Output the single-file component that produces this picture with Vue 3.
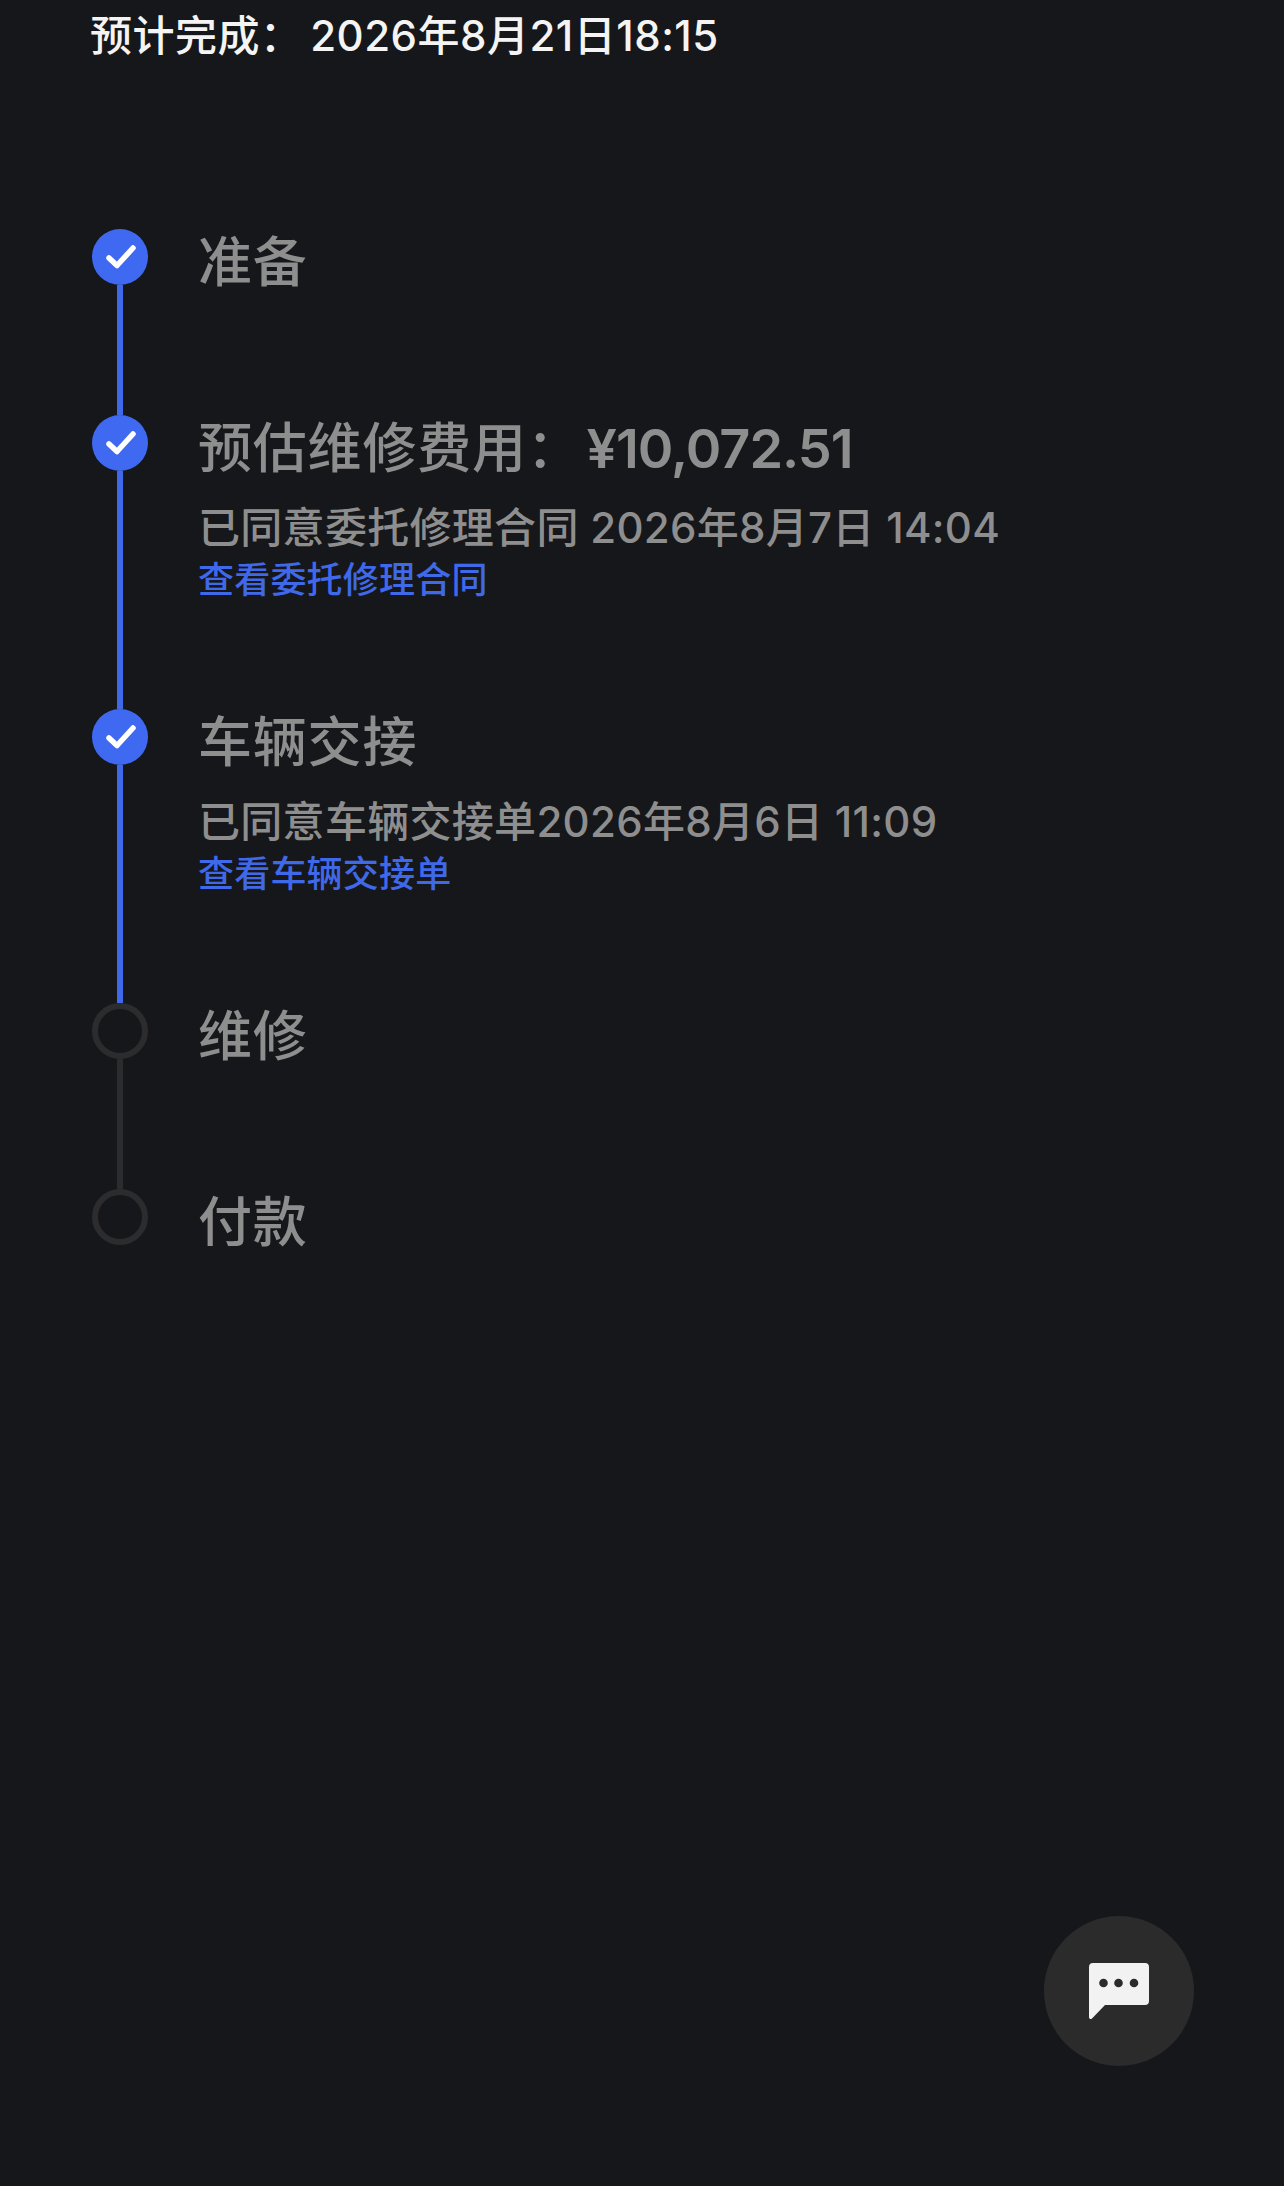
<template>
  <div class="page">
    <div class="eta">预计完成： 2026年8月21日18:15</div>

    <div class="timeline">
      <div v-for="(step, index) in steps" :key="index" class="step">
        <div class="rail">
          <div class="dot" :class="{ done: step.done }">
            <svg v-if="step.done" width="56" height="56" viewBox="0 0 56 56">
              <path d="M17 29L25 36.5L41 19" fill="none" stroke="#fff" stroke-width="5.5" stroke-linecap="round" stroke-linejoin="round" />
            </svg>
          </div>
          <div v-if="index < steps.length - 1" class="line" :class="{ done: step.done }"></div>
        </div>
        <div class="body">
          <div class="title">{{ step.title }}<span v-if="step.amount" class="amount">{{ step.amount }}</span></div>
          <div v-if="step.note" class="note">{{ step.note }}</div>
          <div v-if="step.link" class="link">{{ step.link }}</div>
        </div>
      </div>
    </div>

    <div class="chat">
      <svg width="60" height="57" viewBox="0 0 60 57">
        <path d="M4 0H56A4 4 0 0 1 60 4V38A4 4 0 0 1 56 42H16L3 55.5C1.8 56.7 0 56 0 54V4A4 4 0 0 1 4 0Z" fill="#f2f2f2" />
        <circle cx="14.5" cy="20" r="4.3" fill="#2b2b2c" />
        <circle cx="29.5" cy="20" r="4.3" fill="#2b2b2c" />
        <circle cx="45" cy="20" r="4.3" fill="#2b2b2c" />
      </svg>
    </div>
  </div>
</template>

<script setup>
const steps = [
  { title: '准备', done: true },
  {
    title: '预估维修费用：',
    amount: '¥10,072.51',
    note: '已同意委托修理合同 2026年8月7日 14:04',
    link: '查看委托修理合同',
    done: true,
  },
  {
    title: '车辆交接',
    note: '已同意车辆交接单2026年8月6日 11:09',
    link: '查看车辆交接单',
    done: true,
  },
  { title: '维修', done: false },
  { title: '付款', done: false },
]
</script>

<style>
html,
body {
  background: #16171a;
}
</style>

<style scoped>
.page {
  position: relative;
  height: 2186px;
  overflow: hidden;
  background: #16171a;
  font-family: Inter, "Noto Sans CJK SC", sans-serif;
  font-weight: 500;
  padding-left: 92px;
  box-sizing: border-box;
}
.eta {
  margin-left: -2px;
  padding-top: 8px;
  font-size: 42px;
  line-height: 56px;
  letter-spacing: 0.5px;
  word-spacing: -4px;
  color: #f4f4f4;
}
.timeline {
  margin-top: 165px;
}
.step {
  display: flex;
  gap: 50px;
  min-height: 186px;
}
.rail {
  display: flex;
  flex-direction: column;
  align-items: center;
  width: 56px;
}
.dot {
  width: 56px;
  height: 56px;
  box-sizing: border-box;
  border: 6px solid #2c2c2e;
  border-radius: 50%;
  flex: none;
}
.dot.done {
  border: none;
  background: #4069f2;
}
.dot svg {
  display: block;
}
.line {
  flex: 1;
  width: 6px;
  background: #2c2c2e;
}
.line.done {
  background: #3f69e8;
}
.body {
  padding-top: 2px;
  padding-bottom: 104px;
}
.title {
  font-size: 54px;
  line-height: 64px;
  letter-spacing: 0.8px;
  color: #8e8e8e;
}
.amount {
  margin-left: 5px;
  font-weight: 600;
  letter-spacing: -1px;
}
.note {
  margin-top: 21px;
  font-size: 42px;
  line-height: 52px;
  letter-spacing: 0.3px;
  color: #8e8e8e;
}
.link {
  margin-top: 1px;
  font-size: 36px;
  line-height: 50px;
  letter-spacing: 0.2px;
  color: #3f69e8;
}
.chat {
  position: absolute;
  left: 1044px;
  top: 1916px;
  width: 150px;
  height: 150px;
  border-radius: 50%;
  background: #2b2b2c;
  display: flex;
  align-items: center;
  justify-content: center;
}
</style>
